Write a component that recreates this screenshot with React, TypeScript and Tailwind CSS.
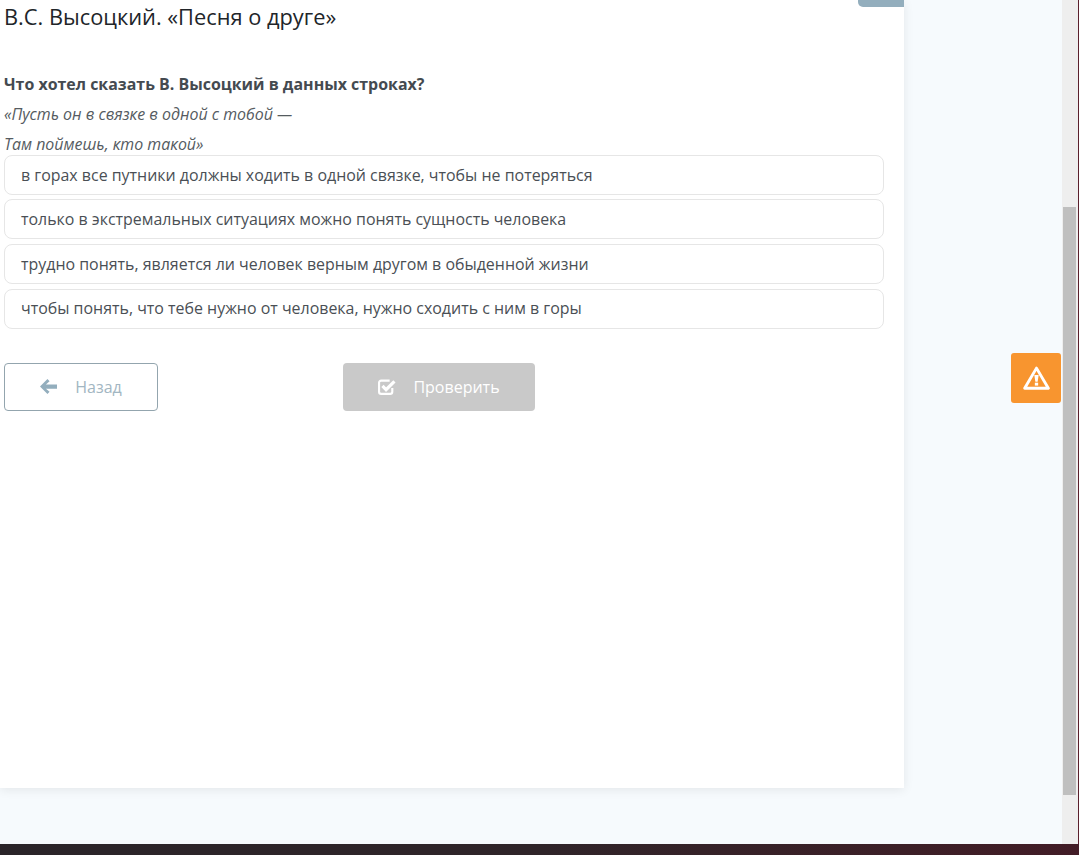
import React from "react";

const options = [
  "в горах все путники должны ходить в одной связке, чтобы не потеряться",
  "только в экстремальных ситуациях можно понять сущность человека",
  "трудно понять, является ли человек верным другом в обыденной жизни",
  "чтобы понять, что тебе нужно от человека, нужно сходить с ним в горы",
];

function ArrowIcon() {
  return (
    <svg width="17" height="15" viewBox="0 0 16 14" className="text-[#93aebd]">
      <polygon points="0,7 7,0 9,2 5.6,5 16,5 16,9 5.6,9 9,12 7,14" fill="currentColor" />
    </svg>
  );
}

function CheckIcon() {
  return (
    <svg width="18" height="16" viewBox="0 0 17 15" fill="none" stroke="currentColor">
      <path d="M13.5 8.5V12a2 2 0 0 1-2 2H3a2 2 0 0 1-2-2V3.5a2 2 0 0 1 2-2h8" strokeWidth="2" />
      <path d="M4.2 6.5L7.6 10L15.5 2.2" strokeWidth="3" />
    </svg>
  );
}

function WarnIcon() {
  return (
    <svg width="27" height="24" viewBox="0 0 26 23">
      <path d="M13 2L24.4 21.4H1.6Z" fill="none" stroke="white" strokeWidth="2.8" strokeLinejoin="round" />
      <path d="M10.9 8.6h4.2l-1 6.6h-2.2Z" fill="white" />
      <rect x="11.4" y="16" width="3.2" height="2.8" fill="white" />
    </svg>
  );
}

export default function App() {
  return (
    <div className="h-[855px] w-full overflow-hidden flex flex-col bg-[#f6fafd] font-['Open_Sans',sans-serif]">
      <div className="h-[844px] flex shrink-0">
        <div className="flex-1 flex min-w-0">
          <main className="w-[904px] h-[788px] bg-white shadow-[0_2px_10px_rgba(0,0,0,0.08)] flex flex-col shrink-0">
            <div className="h-[7px] flex justify-end shrink-0">
              <div className="w-[46px] h-[7px] bg-[#93aebd] rounded-bl-[5px]" />
            </div>
            <div className="pl-1 pr-5 flex flex-col">
              <h1 className="text-[21.8px] leading-[20px] text-[#212529] font-normal">В.С. Высоцкий. «Песня о друге»</h1>
              <p className="mt-[42px] text-[15.94px] leading-[30px] font-bold text-[#444a50]">Что хотел сказать В. Высоцкий в данных строках?</p>
              <p className="text-[15.94px] leading-[30px] italic text-[#555b61]">«Пусть он в связке в одной с тобой —</p>
              <p className="text-[15.94px] leading-[30px] italic text-[#555b61] h-[25.8px]">Там поймешь, кто такой»</p>
              <div className="flex flex-col gap-[4.6px]">
                {options.map((o) => (
                  <div key={o} className="h-10 border border-[#e6e6e6] rounded-lg px-4 pt-[1.6px] flex items-center text-[15.94px] text-[#4a4f55] bg-white">
                    {o}
                  </div>
                ))}
              </div>
              <div className="mt-[34.4px] flex">
                <button className="w-[154px] h-12 border border-[#93a5ae] rounded bg-white flex items-center justify-center gap-[18px] text-base text-[#a2b6c2]">
                  <ArrowIcon />
                  Назад
                </button>
                <button className="ml-[185px] w-[192px] h-12 rounded bg-[#c9c9c9] flex items-center justify-center gap-[17px] text-base text-white">
                  <CheckIcon />
                  Проверить
                </button>
              </div>
            </div>
          </main>
          <div className="flex-1 flex items-start justify-end pt-[353px]">
            <div className="w-[50px] h-[50px] mr-px bg-[#f8952f] rounded-[3px] flex items-center justify-center">
              <WarnIcon />
            </div>
          </div>
        </div>
        <div className="w-[17px] flex shrink-0">
          <div className="w-[16px] bg-[#eeeeee] flex flex-col justify-end">
            <div className="h-[588px] mb-[49px] ml-px w-[13px] bg-[#bfbfbf]" />
          </div>
          <div className="w-px bg-[#5a1f2c]" />
        </div>
      </div>
      <div className="flex-1 bg-gradient-to-r from-[#2a2429] via-[#2f2429] to-[#421c26]" />
    </div>
  );
}
